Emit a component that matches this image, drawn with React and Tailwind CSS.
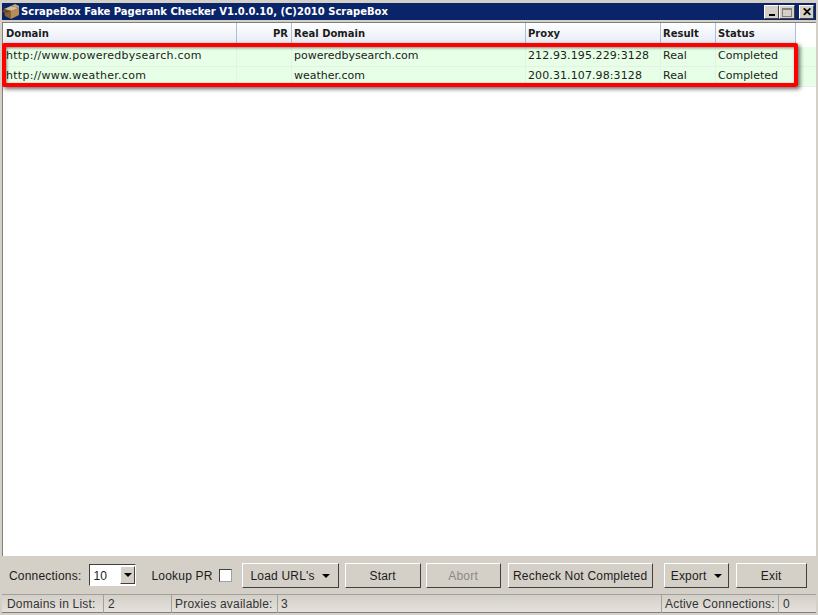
const rows = [
  { domain: "http://www.poweredbysearch.com", real: "poweredbysearch.com", proxy: "212.93.195.229:3128" },
  { domain: "http://www.weather.com", real: "weather.com", proxy: "200.31.107.98:3128" },
];

const raised = "border border-t-white border-l-white border-r-[#404040] border-b-[#404040] bg-[#d4d0c8]";

const HeaderCell = ({ className, children }) => (
  <div className={`flex h-full items-center border-r border-[#a9c0dc] px-[2px] ${className}`}>{children}</div>
);

const Cell = ({ className, children }) => (
  <div className={`flex h-full items-center overflow-hidden whitespace-nowrap border-r border-[#e3f2e3] px-[2px] ${className}`}>{children}</div>
);

const WinButton = ({ className, children }) => (
  <div className={`flex h-[14px] items-end justify-center ${raised} ${className}`}>{children}</div>
);

const Button = ({ className, disabled, arrow, children }) => (
  <div
    className={`flex h-[25px] items-center justify-center gap-[7px] ${raised} ${className} ${disabled ? "text-[#8a8a86]" : "text-[#1c1c1c]"}`}
  >
    <span className="mt-px">{children}</span>
    {arrow && <span className="mt-[2px] h-0 w-0 border-x-[4px] border-t-[4px] border-x-transparent border-t-black" />}
  </div>
);

const BoxIcon = () => (
  <svg width="18" height="15" viewBox="0 0 18 15" className="shrink-0">
    <path d="M2 5 L9 7 L9 15 L3 12 Z" fill="#8a6236" />
    <path d="M9 7 L17 4 L17 11 L9 15 Z" fill="#b98d58" />
    <path d="M2 5 L9 2 L17 4 L9 7 Z" fill="#d9bd92" />
    <path d="M2 5 L0 8 L5 9 L9 7 Z" fill="#6e4a26" />
    <path d="M9 2 L13 0 L17 2 L17 4 Z" fill="#c9a878" />
  </svg>
);

const App = () => {
  return (
    <div className="flex h-[615px] w-[818px] flex-col overflow-hidden border-[2px] border-[#d4d0c8] bg-[#d4d0c8] font-['Liberation_Sans',sans-serif] text-[12px]">
      {/* title bar */}
      <div className="mt-px flex h-[17px] shrink-0 items-center bg-[#0a246a] pr-[2px]">
        <BoxIcon />
        <span className="ml-[1px] font-['DejaVu_Sans',sans-serif] text-[10px] font-bold text-white">
          ScrapeBox Fake Pagerank Checker V1.0.0.10, (C)2010 ScrapeBox
        </span>
        <div className="ml-auto flex items-center">
          <WinButton className="w-[15px]">
            <span className="mb-[2px] h-[2px] w-[6px] bg-black" />
          </WinButton>
          <WinButton className="w-[16px]">
            <span className="mb-[1px] h-[9px] w-[10px] border border-t-2 border-[#808080]" />
          </WinButton>
          <WinButton className="ml-[4px] w-[15px] items-center">
            <span className="text-[12px] font-bold leading-[12px] text-black">✕</span>
          </WinButton>
        </div>
      </div>

      {/* list */}
      <div className="relative mt-[2px] flex min-h-0 flex-1 flex-col border-l border-t border-[#808080] bg-white font-['DejaVu_Sans',sans-serif] text-[#1c1c1c]">
        <div className="flex h-[21px] shrink-0 items-center text-[10px] font-bold">
          <div className="flex h-full items-center bg-gradient-to-b from-white to-[#e6ebf5]">
            <HeaderCell className="w-[234px] pl-[3px]">Domain</HeaderCell>
            <HeaderCell className="w-[55px] justify-end pr-[3px]">PR</HeaderCell>
            <HeaderCell className="w-[234px]">Real Domain</HeaderCell>
            <HeaderCell className="w-[135px]">Proxy</HeaderCell>
            <HeaderCell className="w-[55px]">Result</HeaderCell>
            <HeaderCell className="w-[80px]">Status</HeaderCell>
          </div>
        </div>
        <div className="mt-[3px] flex flex-col text-[11px]">
          {rows.map((row) => (
            <div key={row.domain} className="flex h-[20px] items-center border-b border-[#e3f2e3] bg-[#e6ffe6]">
              <Cell className="w-[234px] pl-[3px] tracking-[0.27px]">{row.domain}</Cell>
              <Cell className="w-[55px]" />
              <Cell className="w-[234px]">{row.real}</Cell>
              <Cell className="w-[135px] tracking-[0.1px]">{row.proxy}</Cell>
              <Cell className="w-[55px]">Real</Cell>
              <Cell className="w-[80px]">Completed</Cell>
            </div>
          ))}
        </div>
        {/* red highlight drawn over the list */}
        <div className="absolute left-[-1px] top-[20px] h-[44px] w-[796px] rounded-[2px] border-[4px] border-[#ff0000] shadow-[2px_2px_4px_rgba(0,0,0,0.6),inset_1px_1px_3px_rgba(0,0,0,0.45)]" />
      </div>

      {/* toolbar */}
      <div className="flex h-[38px] shrink-0 items-center pl-[7px] tracking-[0.2px] text-[#1c1c1c]">
        <span className="mt-px">Connections:</span>
        <div className="ml-[8px] flex h-[22px] w-[47px] items-center border border-t-[#404040] border-l-[#404040] border-r-white border-b-white bg-white">
          <span className="ml-[3px] mt-px flex-1">10</span>
          <div className={`flex h-[18px] w-[15px] items-center justify-center ${raised}`}>
            <span className="h-0 w-0 border-x-[4px] border-t-[4px] border-x-transparent border-t-black" />
          </div>
        </div>
        <span className="ml-[15px] mt-px">Lookup PR</span>
        <div className="ml-[6px] h-[13px] w-[13px] border border-t-[#404040] border-l-[#404040] border-r-[#a0a0a0] border-b-[#a0a0a0] bg-white" />
        <Button arrow className="ml-[10px] w-[97px]">Load URL's</Button>
        <Button className="ml-[6px] w-[76px]">Start</Button>
        <Button disabled className="ml-[5px] w-[75px]">Abort</Button>
        <Button className="ml-[7px] w-[145px]">Recheck Not Completed</Button>
        <Button arrow className="ml-[11px] w-[65px]">Export</Button>
        <Button className="ml-[7px] w-[71px]">Exit</Button>
      </div>

      {/* status bar */}
      <div className="flex h-[19px] shrink-0 items-center border-y border-t-[#a0a0a0] border-b-[#808080] bg-gradient-to-b from-[#d4d0c8] to-[#e4e1db] pt-px tracking-[0.2px] text-[#333333]">
        <span className="w-[101px] pl-[5px]">Domains in List:</span>
        <span className="w-[68px] border-l border-[#a0a0a0] pl-[4px]">2</span>
        <span className="w-[106px] border-l border-[#a0a0a0] pl-[3px]">Proxies available:</span>
        <span className="border-l border-[#a0a0a0] pl-[3px]">3</span>
        <span className="ml-auto w-[117px] border-l border-[#a0a0a0] pl-[3px]">Active Connections:</span>
        <span className="w-[38px] border-l border-[#a0a0a0] pl-[4px]">0</span>
      </div>
    </div>
  );
};

export default App;
